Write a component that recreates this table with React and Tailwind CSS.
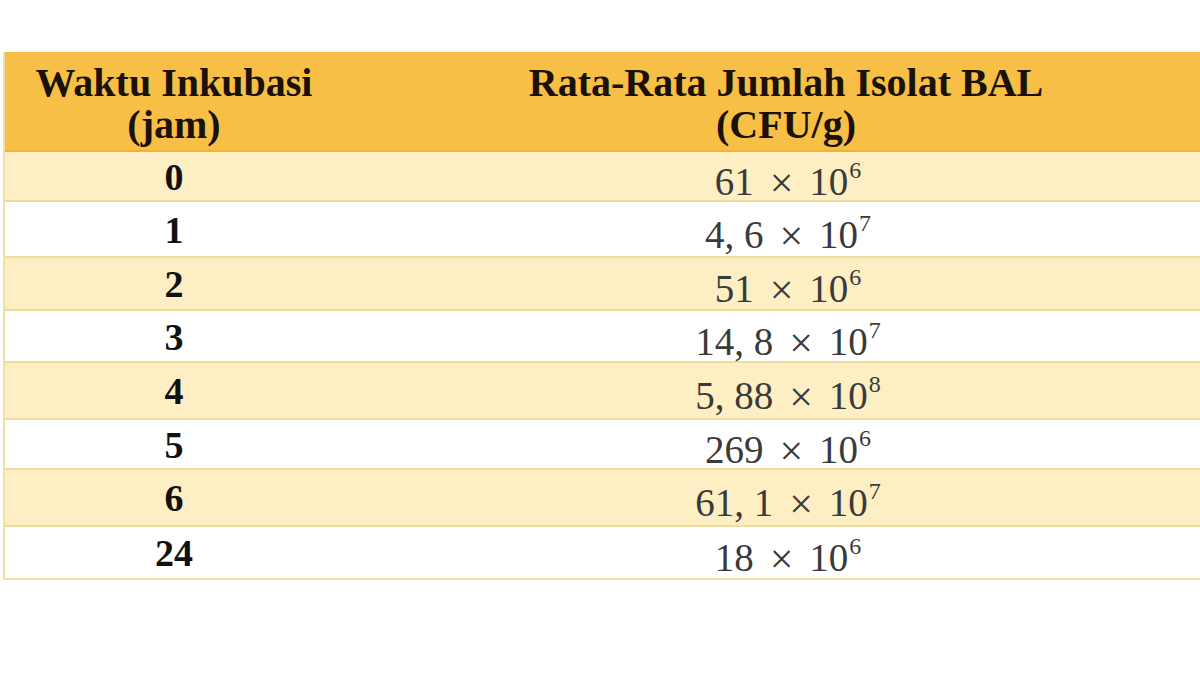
const ROWS = [
  { jam: '0', base: '61', exp: '6', h: 'h-[50px]' },
  { jam: '1', base: '4, 6', exp: '7', h: 'h-[56px]' },
  { jam: '2', base: '51', exp: '6', h: 'h-[53px]' },
  { jam: '3', base: '14, 8', exp: '7', h: 'h-[52px]' },
  { jam: '4', base: '5, 88', exp: '8', h: 'h-[57px]' },
  { jam: '5', base: '269', exp: '6', h: 'h-[50px]' },
  { jam: '6', base: '61, 1', exp: '7', h: 'h-[57px]' },
  { jam: '24', base: '18', exp: '6', h: 'h-[51px]' },
]

const serif = 'font-["Liberation_Serif","Times_New_Roman",serif]'

export default function App() {
  return (
    <div className="w-[1200px] h-[675px] bg-white overflow-hidden">
      <div className="pt-[52px] pl-[3px]">
        <div className={`w-[1226px] border-l-2 border-b-2 border-[#efe0a6] ${serif}`}>
          {/* Header */}
          <div className="flex h-[100px] bg-[#f7bf45] border-b-2 border-[#f0b233] text-[#1a1208] font-bold text-[40px] leading-[42px]">
            <div className="w-[338px] flex flex-col items-center justify-center pt-[6px]">
              <span>Waktu Inkubasi</span>
              <span>(jam)</span>
            </div>
            <div className="flex-1 flex flex-col items-center justify-center pt-[6px]">
              <span>Rata-Rata Jumlah Isolat BAL</span>
              <span>(CFU/g)</span>
            </div>
          </div>

          {/* Body */}
          {ROWS.map((r, i) => (
            <div
              key={r.jam}
              className={`flex ${r.h} ${i % 2 === 0 ? 'bg-[#fdeec3]' : 'bg-white'} ${i < ROWS.length - 1 ? 'border-b-2 border-[#eedc9c]' : ''}`}
            >
              <div className="w-[338px] flex items-center justify-center font-bold text-[38px] text-[#111] pt-[2px]">
                {r.jam}
              </div>
              <div className="flex-1 flex items-center justify-center text-[39px] text-[#3a3a3a] pt-[12px] pl-[4px]">
                <span className="leading-[40px]">
                  {r.base}
                  <span className="mx-[16px] text-[42px] leading-[40px] align-[-2px]">×</span>
                  10
                  <sup className="text-[24px] -top-[17px] ml-[1px]">{r.exp}</sup>
                </span>
              </div>
            </div>
          ))}
        </div>
      </div>
    </div>
  )
}
